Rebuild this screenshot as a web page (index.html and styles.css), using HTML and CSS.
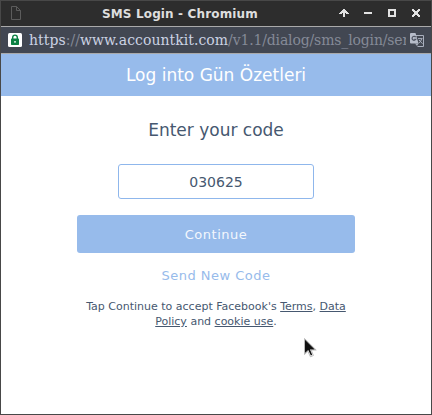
FILE: index.html
```
<!DOCTYPE html>
<html lang="en">
<head>
<meta charset="utf-8">
<title>SMS Login</title>
<link rel="stylesheet" href="styles.css">
</head>
<body>
<div class="window">
  <header class="titlebar">
    <svg class="file" width="12" height="15" viewBox="0 0 12 15"><path d="M1.5 .5h5l4 4v9h-9zM6.5 .5v4h4"/></svg>
    <span class="title">SMS Login - Chromium</span>
    <svg class="controls" width="82" height="11" viewBox="0 0 82 11" shape-rendering="crispEdges">
      <path d="M4 9V4h2v5zM0 5h1V4h1V3h1V2h1V1h2v1h1v1h1v1h1v1h1v1H7V5H3v1H0z"/>
      <path d="M25 4h8v2h-8zM49 1h8v8h-8zM51 3v4h4V3z" fill-rule="evenodd"/>
      <path d="M73 1h2v1h1v1h2V2h1V1h2v2h-1v1h-1v2h1v1h1v2h-2V8h-1V7h-2v1h-1v1h-2V7h1V6h1V4h-1V3h-1z"/>
    </svg>
  </header>
  <div class="address">
    <svg class="lock" width="14" height="14" viewBox="0 0 14 14"><rect width="14" height="14" rx="1.5" fill="#fff"/><rect x="3" y="5.5" width="8" height="6.5" rx=".7" fill="#0b8043"/><path d="M4.7 6V4.4a2.3 2.3 0 0 1 4.6 0V6" fill="none" stroke="#0b8043" stroke-width="1.4"/><rect x="6.3" y="8" width="1.4" height="1.7" fill="#fff"/></svg>
    <span class="url">https<i>://</i>www.accountkit.com<i class="path">/v1.1/dialog/sms_login/sent</i></span>
    <svg class="translate" width="14" height="14" viewBox="0 0 14 14"><path d="M6 2.5h7.5v11h-6" fill="none" stroke="#a9afbd"/><path d="M1 0h4.5l3 10.5H1a1 1 0 0 1-1-1V1a1 1 0 0 1 1-1z" fill="#b7bdca"/><path d="M5.7 4.1a2 2 0 1 0 .1 2.2H4.2" fill="none" stroke="#4d5361" stroke-width="1.2"/><path d="M8 5.6h4.5M11.7 5.8Q11 9 8.5 10.2M9 7l3.5 3.7" fill="none" stroke="#a9afbd"/><path d="M5 10.5h3.5L7 13z" fill="#a9afbd"/></svg>
  </div>
  <div class="banner">Log into Gün Özetleri</div>
  <main>
    <h1>Enter your code</h1>
    <input class="code" value="030625" aria-label="Code">
    <button class="continue">Continue</button>
    <a class="resend">Send New Code</a>
    <p>Tap Continue to accept Facebook's <u>Terms</u>, <u>Data Policy</u> and <u>cookie use</u>.</p>
  </main>
  <svg class="pointer" width="15" height="22" viewBox="0 0 15 22"><path d="M1.5 1.5v16l3.4-3.2 2.5 5.5 3-1.3L8.200 13h5z" fill="#fff" stroke="#aaa" stroke-width=".8"/><path d="M2 2.8v13.200L5.200 13l2.700 5.4 1.300-.6-2.200-5.200h4.8z" fill="#111"/></svg>
</div>
</body>
</html>
```
FILE: styles.css
```
* { box-sizing: border-box; }
body { margin: 0; font-family: "DejaVu Sans", sans-serif; color: #465870; }
.window { position: relative; width: 432px; height: 415px; border: 1px solid #484848; background: #fff; overflow: hidden; }
.titlebar { display: flex; align-items: center; height: 26px; padding: 0 10px 0 9px; background: #2d2d2d; border-bottom: 1px solid #aaa; }
.file { fill: none; stroke: #5c5c5c; }
.title { flex: 1; padding-left: 80px; font-size: 12px; font-weight: bold; line-height: 24px; letter-spacing: .14px; color: #dedede; white-space: nowrap; }
.controls { fill: #e2e2e2; }
.address { display: flex; align-items: center; height: 27px; padding: 0 7px; background: #424752; border-bottom: 1px solid #aaa; }
.lock, .translate { flex: none; }
.url { flex: 1; margin: 0 4px 0 7px; overflow: hidden; white-space: nowrap; font: 14px/26px "DejaVu Serif", serif; letter-spacing: .04px; color: #cbd2e3; }
.url i { font-style: normal; color: #858a97; }
.url .path { letter-spacing: -.15px; }
.banner { height: 42px; line-height: 42px; background: #97bbeb; color: #fff; text-align: center; font-size: 17px; }
main { display: flex; flex-direction: column; align-items: center; }
h1 { margin: 22px 0; font-size: 17px; font-weight: normal; line-height: 24px; }
.code { width: 196px; height: 35px; padding: 0; border: 1px solid #8fb7ec; border-radius: 3px; background: #fff; color: #465870; font: 14px "DejaVu Sans", sans-serif; text-align: center; }
.continue { width: 278px; height: 38px; margin-top: 16px; padding: 0; border: 0; border-radius: 3px; background: #97bbeb; color: #f3f7fd; font: 13px "DejaVu Sans", sans-serif; letter-spacing: .5px; }
.resend { margin-top: 13px; font-size: 13px; line-height: 20px; letter-spacing: .5px; color: #97bbeb; }
p { width: 278px; margin: 13px 0 0; font-size: 11px; line-height: 15px; text-align: center; }
.pointer { position: absolute; left: 302px; top: 336px; }
```
